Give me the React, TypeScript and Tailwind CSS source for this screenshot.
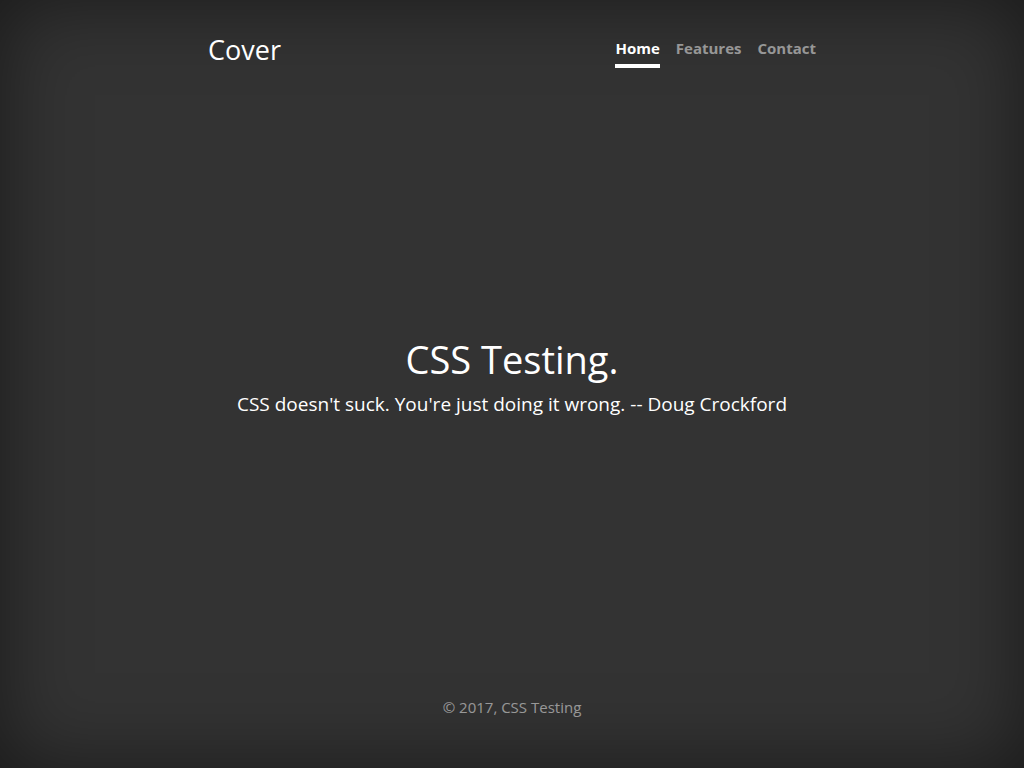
export default function App() {
  return (
    <div
      className="h-screen w-full bg-[#333333] text-white flex shadow-[inset_0_0_5rem_rgba(0,0,0,0.5)]"
      style={{ fontFamily: '"Open Sans", "Noto Sans", sans-serif' }}
    >
      <div className="w-[640px] mx-auto h-full p-4 flex flex-col">
        <header className="mb-auto">
          <div className="flex items-center justify-between">
            <h3 className="text-[27px] leading-[1.2] mt-[17px]">Cover</h3>
            <nav className="flex gap-4 mt-[17px] text-[15px] font-bold">
              <a className="text-white border-b-4 border-white py-1">Home</a>
              <a className="text-white/50 border-b-4 border-transparent py-1">Features</a>
              <a className="text-white/50 border-b-4 border-transparent py-1">Contact</a>
            </nav>
          </div>
        </header>
        <main className="px-4 text-center mb-[7px]">
          <h1 className="text-[38px] leading-[1.2] mb-[7px]">CSS Testing.</h1>
          <p className="text-[19px] leading-[1.5]">
            CSS doesn't suck. You're just doing it wrong. -- Doug Crockford
          </p>
        </main>
        <footer className="mt-auto text-center text-white/50 text-[15px] pb-[34px]">
          <p>© 2017, CSS Testing</p>
        </footer>
      </div>
    </div>
  );
}
